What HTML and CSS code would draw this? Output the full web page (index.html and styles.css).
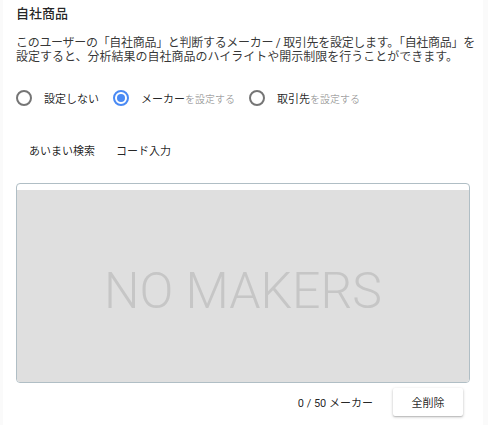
FILE: index.html
```html
<!DOCTYPE html>
<html lang="ja">
<head>
<meta charset="utf-8">
<link rel="stylesheet" href="styles.css">
</head>
<body>
<div class="panel">
  <h2 class="title">自社商品</h2>
  <p class="desc"><span class="tight">このユーザーの「自社商品」と判断するメーカー / 取引先を設定します。「自社商品」を</span><br>設定すると、分析結果の自社商品のハイライトや開示制限を行うことができます。</p>
  <div class="radios">
    <label class="radio"><span class="circle"></span><span class="lbl">設定しない</span></label>
    <label class="radio on"><span class="circle"></span><span class="lbl">メーカー<small>を設定する</small></span></label>
    <label class="radio"><span class="circle"></span><span class="lbl">取引先<small>を設定する</small></span></label>
  </div>
  <div class="tabs">
    <span class="tab">あいまい検索</span>
    <span class="tab">コード入力</span>
  </div>
  <div class="box">
    <div class="box-inner">NO MAKERS</div>
  </div>
  <div class="footer">
    <span class="count">0 / 50 メーカー</span>
    <button class="btn">全削除</button>
  </div>
</div>
</body>
</html>
```
FILE: styles.css
```css
html, body { margin: 0; padding: 0; }
body {
  background: #fafafa;
  font-family: Roboto, "Noto Sans CJK JP", sans-serif;
  color: rgba(0,0,0,0.87);
  width: 488px;
  height: 425px;
  overflow: hidden;
}
.panel {
  margin: 0 5px 0 3px;
  background: #fff;
  height: 425px;
  padding: 0 13px;
}
.title {
  margin: 0;
  padding-top: 4px;
  font-size: 13px;
  font-weight: 500;
  line-height: 20px;
}
.desc {
  margin: 12px 0 0;
  font-size: 12px;
  line-height: 14px;
  color: rgba(0,0,0,0.8);
  white-space: nowrap;
}
.desc .tight {
  letter-spacing: -0.3px;
}
.radios {
  display: flex;
  align-items: center;
  margin-top: 24px;
  height: 20px;
}
.radio {
  display: flex;
  align-items: center;
  margin-right: 14px;
  font-size: 11px;
}
.circle {
  width: 12px;
  height: 12px;
  border: 2px solid rgba(0,0,0,0.54);
  border-radius: 50%;
  margin: 0 12px 0 0;
  box-sizing: content-box;
  position: relative;
}
.radio.on .circle {
  border-color: #4a8af4;
}
.radio.on .circle::after {
  content: "";
  position: absolute;
  left: 2px; top: 2px;
  width: 8px; height: 8px;
  border-radius: 50%;
  background: #4a8af4;
}
.lbl small {
  font-size: 10px;
  color: rgba(0,0,0,0.38);
}
.tabs {
  display: flex;
  margin-top: 32px;
  padding-left: 13px;
  gap: 21px;
  font-size: 11px;
  height: 20px;
  align-items: center;
}
.box {
  margin-top: 23px;
  border: 1px solid #b0bec5;
  border-radius: 4px;
  padding-top: 6px;
  overflow: hidden;
  background: #fff;
}
.box-inner {
  background: #dfdfdf;
  height: 182px;
  padding-top: 10px;
  display: flex;
  align-items: center;
  justify-content: center;
  font-family: Roboto, sans-serif;
  font-weight: 300;
  font-size: 50px;
  color: #c6c6c6;
}
.footer {
  display: flex;
  justify-content: flex-end;
  align-items: center;
  margin-top: 5px;
  padding-right: 7px;
}
.count {
  font-size: 11px;
  margin-right: 20px;
}
.btn {
  font-family: inherit;
  font-size: 11px;
  color: rgba(0,0,0,0.87);
  background: #fff;
  border: none;
  border-radius: 2px;
  width: 70px;
  height: 28px;
  box-shadow: 0 1px 3px rgba(0,0,0,0.25), 0 1px 1px rgba(0,0,0,0.1);
}
```
